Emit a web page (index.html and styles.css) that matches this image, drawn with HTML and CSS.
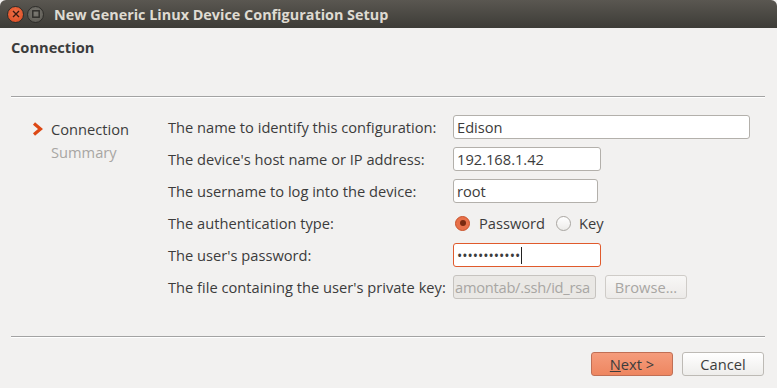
FILE: index.html
```html
<!DOCTYPE html>
<html lang="en">

<head>
    <meta charset="UTF-8">
    <title>New Generic Linux Device Configuration Setup</title>
    <link rel="stylesheet" href="styles.css">
</head>

<body>

    <div class="window">
        <!-- Title bar -->
        <div class="titlebar">
            <span class="wbtn close">
                <svg width="8" height="8" viewBox="0 0 8 8"><path d="M1 1 L7 7 M7 1 L1 7" stroke="#3a1a10" stroke-width="1.4"/></svg>
            </span>
            <span class="wbtn max">
                <svg width="8" height="8" viewBox="0 0 8 8"><rect x="0.8" y="0.8" width="6.4" height="6.4" fill="none" stroke="#2d2c29" stroke-width="1.4"/></svg>
            </span>
            <span class="title">New Generic Linux Device Configuration Setup</span>
        </div>

        <div class="header">Connection</div>
        <div class="sep"></div>

        <div class="content">
            <!-- Wizard steps -->
            <div class="steps">
                <div class="step current">
                    <svg class="arrow" width="11" height="14" viewBox="0 0 11 14"><path d="M2 1.5 L8.5 7 L2 12.5" fill="none" stroke="#dd4814" stroke-width="3.2" stroke-linejoin="miter"/></svg>
                    Connection
                </div>
                <div class="step">Summary</div>
            </div>

            <!-- Form -->
            <div class="form">
                <label>The name to identify this configuration:</label>
                <div><input class="field wide" type="text" value="Edison"></div>

                <label>The device's host name or IP address:</label>
                <div><input class="field w148" type="text" value="192.168.1.42"></div>

                <label>The username to log into the device:</label>
                <div><input class="field w145" type="text" value="root"></div>

                <label>The authentication type:</label>
                <div class="radios">
                    <span class="radio on"></span><span class="rlabel">Password</span>
                    <span class="radio"></span><span class="rlabel">Key</span>
                </div>

                <label>The user's password:</label>
                <div><div class="field w148 focus"><span class="dots">&bull;&bull;&bull;&bull;&bull;&bull;&bull;&bull;&bull;&bull;&bull;&bull;</span><span class="caret"></span></div></div>

                <label>The file containing the user's private key:</label>
                <div class="keyrow">
                    <input class="field w143 keyfile" type="text" value="amontab/.ssh/id_rsa" disabled>
                    <button class="btn" disabled>Browse...</button>
                </div>
            </div>
        </div>

        <div class="sep bottom"></div>

        <div class="footer">
            <button class="btn primary"><u>N</u>ext &gt;</button>
            <button class="btn">Cancel</button>
        </div>
    </div>

</body>

</html>
```

FILE: styles.css
```css
/* Global */
body {
    margin: 0;
    background-color: #f2f1f0;
    font-family: "Open Sans", "DejaVu Sans", sans-serif;
    font-size: 14.67px;
    color: #3c3c3c;
}

.window {
    width: 777px;
    height: 388px;
    background-color: #f2f1f0;
    overflow: hidden;
}

/* Title bar */
.titlebar {
    height: 28px;
    display: flex;
    align-items: center;
    padding-left: 7px;
    background: linear-gradient(#5a5751, #3d3c37);
    border-radius: 6px 6px 0 0;
    box-sizing: border-box;
}

.wbtn {
    width: 17px;
    height: 17px;
    border-radius: 50%;
    display: flex;
    align-items: center;
    justify-content: center;
    margin-right: 3px;
    box-sizing: border-box;
}

.wbtn.close {
    background: radial-gradient(circle at 50% 40%, #f07048, #d94a20);
    border: 1px solid #2e2d2a;
}

.wbtn.max {
    background: radial-gradient(circle at 50% 40%, #7a7872, #58564f);
    border: 1px solid #2e2d2a;
}

.title {
    margin-left: 7px;
    color: #dfdbd2;
    font-weight: bold;
    font-size: 14.4px;
}

/* Page header */
.header {
    font-weight: bold;
    color: #3c3c3c;
    padding: 9px 0 0 11px;
    height: 58px;
    box-sizing: border-box;
}

.sep {
    margin: 10px 12px 0 11px;
    height: 1px;
    background-color: #a3a3a3;
    border-bottom: 1px solid #ffffff;
}

.sep.bottom {
    margin-top: 0;
}

/* Content */
.content {
    display: flex;
    padding: 13px 0 0 32px;
    height: 238px;
    box-sizing: border-box;
}

.steps {
    width: 136px;
    padding-top: 7px;
}

.step {
    color: #a8a6a3;
    height: 23px;
    line-height: 22px;
    padding-left: 19px;
    position: relative;
}

.step.current {
    color: #3c3c3c;
}

.step .arrow {
    position: absolute;
    left: 0;
    top: 4px;
}

.form {
    display: grid;
    grid-template-columns: 285px auto;
    grid-auto-rows: 32px;
    align-items: center;
}

.form label {
    color: #3c3c3c;
}

.field {
    box-sizing: border-box;
    height: 24px;
    border: 1px solid #b3b0ab;
    border-radius: 3px;
    background-color: #ffffff;
    font-family: inherit;
    font-size: 14.67px;
    color: #3c3c3c;
    padding: 0 3px;
    display: block;
}

.wide { width: 297px; }
.w148 { width: 148px; }
.w145 { width: 145px; }
.w143 { width: 143px; }

.field.focus {
    border-color: #e05a2c;
    display: flex;
    align-items: center;
}

.dots {
    font-size: 14px;
    letter-spacing: 0;
    color: #3c3c3c;
}

.caret {
    width: 1px;
    height: 17px;
    background-color: #222;
    margin-left: 1px;
}

.field:disabled {
    background-color: #eae8e5;
    border-color: #c6c3bf;
    color: #a8a6a3;
}

.keyfile {
    padding: 0 1px;
    letter-spacing: -0.25px;
}

/* Radios */
.radios {
    display: flex;
    align-items: center;
    padding-left: 2px;
}

.radio {
    width: 15px;
    height: 15px;
    border-radius: 50%;
    border: 1px solid #a9a6a1;
    background: linear-gradient(#ffffff, #ecebe9);
    box-sizing: border-box;
    margin-right: 9px;
    position: relative;
}

.radio.on {
    background: #e8714a;
    border-color: #c9522a;
}

.radio.on::after {
    content: "";
    position: absolute;
    left: 3.5px;
    top: 3.5px;
    width: 6px;
    height: 6px;
    border-radius: 50%;
    background-color: #7a2a10;
}

.rlabel {
    margin-right: 11px;
}

.rlabel + .radio {
    margin-right: 8px;
}

.keyrow {
    display: flex;
    align-items: center;
}

/* Buttons */
.btn {
    font-family: inherit;
    font-size: 14.67px;
    color: #3c3c3c;
    height: 24px;
    width: 82px;
    border: 1px solid #bdbab5;
    border-radius: 3px;
    background: linear-gradient(#ffffff, #eeedeb);
    padding: 0;
}

.keyrow .btn {
    margin-left: 9px;
}

.btn:disabled {
    color: #a8a6a3;
    background: linear-gradient(#f8f7f6, #eceae8);
    border-color: #cfccc8;
}

.btn.primary {
    background: linear-gradient(#f59c7c, #ee8660);
    border-color: #c06f55;
}

.btn u {
    text-decoration-thickness: 1px;
}

/* Footer */
.footer {
    display: flex;
    justify-content: flex-end;
    gap: 9px;
    padding: 14px 13px 0 0;
}
```
